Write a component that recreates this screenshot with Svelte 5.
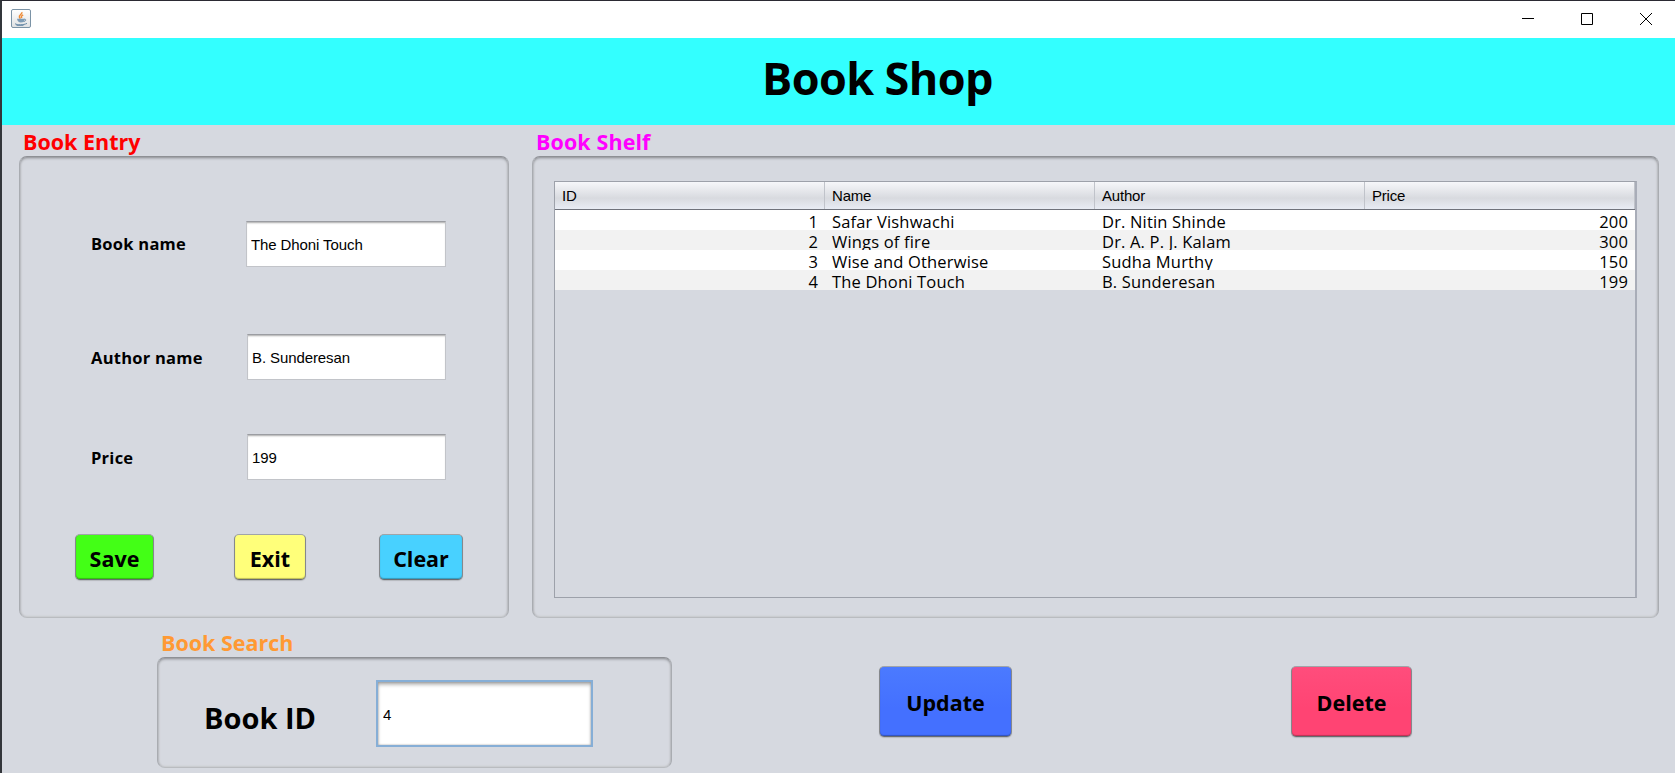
<script>
  const fields = [
    { label: 'Book name', value: 'The Dhoni Touch', cls: 'book' },
    { label: 'Author name', value: 'B. Sunderesan', cls: 'author' },
    { label: 'Price', value: '199', cls: 'price' }
  ];
  const books = [
    [1, 'Safar Vishwachi', 'Dr. Nitin Shinde', 200],
    [2, 'Wings of fire', 'Dr. A. P. J. Kalam', 300],
    [3, 'Wise and Otherwise', 'Sudha Murthy', 150],
    [4, 'The Dhoni Touch', 'B. Sunderesan', 199]
  ];
</script>

<div class="window">
  <header class="titlebar">
    <svg class="java" width="20" height="19" viewBox="0 0 20 19">
      <defs>
        <linearGradient id="tile" x1="0" y1="0" x2="0" y2="1">
          <stop offset="0" stop-color="#fff" />
          <stop offset="1" stop-color="#dfe1e3" />
        </linearGradient>
      </defs>
      <rect x=".5" y=".5" width="19" height="18" rx="1.5" fill="url(#tile)" stroke="#7b93a6" />
      <path d="M10.800 3.200C11.800 5 7.600 6 8.400 8.200L9.400 9.600M12.200 5.800C10.200 6.800 10 7.400 10.800 9" fill="none" stroke="#ee8a35" stroke-width="1.500" />
      <path d="M6 9.800h7.500c0 3-1 3.600-3.500 3.600S6.600 12.600 6 9.800z" fill="#7d9bb5" />
      <path d="M13.200 10.200c2.200-.4 2 2-.4 2.300M4 14.700c2 1.500 8.500 1.500 12-.3M5.500 16.300h7" fill="none" stroke="#6688a6" stroke-width="1" />
    </svg>
    <nav class="controls">
      <svg width="12" height="12" viewBox="0 0 12 12"><path d="M0 5.500h12" stroke="#000" /></svg>
      <svg width="12" height="12" viewBox="0 0 12 12"><path d="M.5.5h11v11H.5z" fill="none" stroke="#000" /></svg>
      <svg width="12" height="12" viewBox="0 0 12 12"><path d="M0 0l12 12M12 0L0 12" stroke="#000" /></svg>
    </nav>
  </header>

  <div class="banner"><h1>Book Shop</h1></div>

  <main>
    <section class="entry">
      <h2>Book Entry</h2>
      <div class="panel">
        {#each fields as f}
          <label class="field {f.cls}">
            <span>{f.label}</span>
            <input type="text" value={f.value} />
          </label>
        {/each}
        <div class="buttons">
          <button class="save">Save</button>
          <button class="exit">Exit</button>
          <button class="clear">Clear</button>
        </div>
      </div>
    </section>

    <section class="shelf">
      <h2>Book Shelf</h2>
      <div class="panel">
        <div class="table">
          <div class="row head"><span>ID</span><span>Name</span><span>Author</span><span>Price</span></div>
          {#each books as b}
            <div class="row">
              <span class="num">{b[0]}</span><span>{b[1]}</span><span>{b[2]}</span><span class="num">{b[3]}</span>
            </div>
          {/each}
        </div>
      </div>
    </section>
  </main>

  <footer>
    <section class="search">
      <h2>Book Search</h2>
      <div class="panel">
        <span class="idlabel">Book ID</span>
        <input type="text" value="4" />
      </div>
    </section>
    <button class="update">Update</button>
    <button class="delete">Delete</button>
  </footer>
</div>

<style>
  :global(body) { background: #d6d9e0; overflow: hidden; }
  .window, .window * { box-sizing: border-box; }
  .window {
    width: 1675px; height: 773px; overflow: hidden;
    border-top: 1px solid #2b2a33; border-left: 2px solid #33363b;
    background: #d6d9e0; color: #000;
    font-family: "Open Sans", "Noto Sans", sans-serif;
  }
  .titlebar { height: 37px; background: #fff; display: flex; justify-content: space-between; padding: 8px 23px 0 9px; }
  .titlebar svg { display: block; }
  .controls { display: flex; gap: 47px; padding-top: 4px; }
  .banner { height: 87px; background: #33ffff; display: flex; justify-content: center; padding-right: 2px; }
  h1 { margin: 7px 0 0 80px; font-size: 45px; line-height: 66px; height: 66px; font-weight: 700; white-space: nowrap; letter-spacing: -.6px; }
  h2 { margin: 0; font-size: 21.500px; line-height: 34px; height: 31px; font-weight: 700; white-space: nowrap; }
  main { display: flex; gap: 23px; padding: 0 16px 0 17px; height: 493px; }
  .entry { width: 490px; color: #f00; }
  .shelf { width: 1127px; color: #f0f; }
  .entry h2, .shelf h2 { padding-left: 4px; }
  .panel {
    color: #000; border: 1px solid #b0b3b8; border-color: #8e9095 #a9acb1 #b9bcc0 #a9acb1; border-radius: 8px;
    box-shadow: inset 0 2px 3px -1px #85878c, inset 2px 0 2px -1px #c0c2c7, inset -2px 0 2px -1px #c0c2c7, inset 0 -2px 2px -1px #cacccf;
  }
  .entry .panel { height: 462px; padding: 64px 45px 0 55px; }
  .field { display: flex; justify-content: space-between; align-items: flex-start; padding: 0 17px 0 16px; height: 113px; }
  .field span { font-size: 16.500px; line-height: 24px; margin-top: 11px; font-weight: 700; white-space: nowrap; letter-spacing: .25px; }
  .author span, .price span { margin-top: 12px; }
  .field.author { height: 100px; }
  .field.price { height: 100px; }
  input {
    font-family: "Liberation Sans", Arial, sans-serif; font-size: 15px; letter-spacing: -.1px; color: #000; outline: 0;
    margin: 0; padding: 1px 0 0 4px; height: 46px; width: 199px; background: #fff;
    border: 1px solid #c2c4c9; border-top-color: #9b9da2; border-radius: 0;
    box-shadow: inset 0 2px 2px -1px #aaa;
  }
  .book input { width: 200px; }
  .buttons { display: flex; }
  button {
    font: 700 21.500px/30px "Open Sans", "Noto Sans", sans-serif; color: #000; padding: 3px 0 0;
    border: 1px solid #777b80; border-color: #a0a4a8 #85888c #686b70; border-radius: 5px; height: 46px;
    box-shadow: 0 1px 1px #b5b7bd, inset 0 -1px 1px #0004; white-space: nowrap; flex: none;
  }
  .save { width: 79px; background: #43ff16; }
  .exit { width: 72px; background: #ffff7a; margin-left: 80px; }
  .clear { width: 84px; background: #48d1ff; margin-left: 73px; }
  .shelf .panel { height: 462px; padding: 24px 21px; }
  .shelf h2 { width: 118px; letter-spacing: .1px; }
  .table { height: 417px; border: 1px solid #9da1aa; border-right-width: 2px; border-right-color: #a9adb8; font-size: 16.500px; letter-spacing: .17px; }
  .row { display: grid; grid-template-columns: 270px 270px 270px 1fr; height: 20px; line-height: 24px; background: #fff; }
  .row:nth-child(odd) { background: #f2f2f2; }
  .row span { padding: 0 7px; height: 20px; overflow: hidden; white-space: nowrap; }
  .num { text-align: right; }
  .row.head {
    height: 28px; font: 15px/28px "Liberation Sans", Arial, sans-serif; letter-spacing: -.2px; border-bottom: 1px solid #6f727b;
    background: linear-gradient(#f6f7fa, #d8dadf 60%, #e8ecf4);
  }
  .row.head span { height: 27px; border-right: 1px solid #c0c3ca; }
  footer { display: flex; }
  .search { width: 515px; margin-left: 155px; padding-top: 8px; color: #ff9933; }
  .search h2 { padding-left: 4px; height: 31px; }
  .search .panel { display: flex; height: 111px; padding: 22px 0 0 46px; }
  .idlabel { font-size: 29px; line-height: 40px; font-weight: 700; margin-top: 18px; width: 172px; white-space: nowrap; }
  .search input { width: 217px; height: 67px; border: 2px solid #86aed6; padding-left: 5px; box-shadow: inset 0 3px 4px -1px #999, inset 0 0 2px #999; }
  .update { width: 133px; height: 71px; margin: 48px 0 0 207px; background: linear-gradient(#4b7aff, #4470ff 60%); }
  .delete { width: 121px; height: 71px; margin: 48px 0 0 279px; background: linear-gradient(#ff4d7c, #ff4473 60%); }
</style>
